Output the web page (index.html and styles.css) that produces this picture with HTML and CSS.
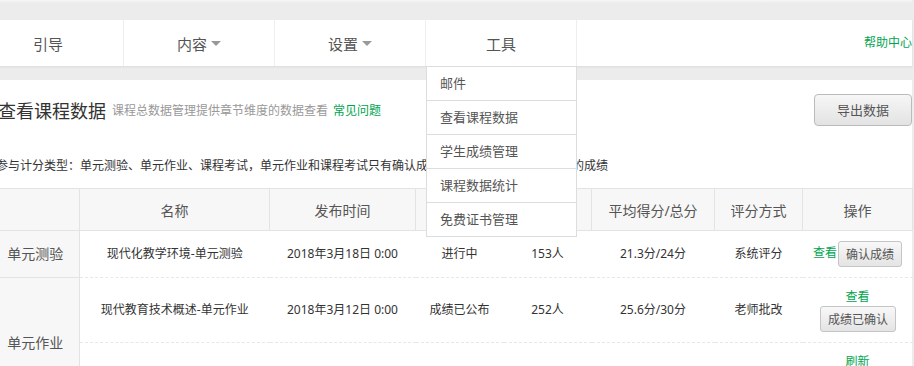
FILE: index.html
```html
<!DOCTYPE html>
<html lang="zh-CN">
<head>
  <meta charset="UTF-8" />
  <title>查看课程数据</title>
  <link rel="stylesheet" href="styles.css">
</head>
<body>
  <div class="page">
    <div class="topband"></div>

    <!-- 顶部导航 -->
    <div class="nav">
      <div class="nav-item">引导</div>
      <div class="nav-item">内容<span class="caret"></span></div>
      <div class="nav-item">设置<span class="caret"></span></div>
      <div class="nav-item">工具
        <ul class="dropdown">
          <li>邮件</li>
          <li>查看课程数据</li>
          <li>学生成绩管理</li>
          <li>课程数据统计</li>
          <li>免费证书管理</li>
        </ul>
      </div>
      <a class="nav-help" href="#">帮助中心</a>
    </div>

    <div class="main">
      <div class="head">
        <h1>查看课程数据</h1>
        <span class="desc">课程总数据管理提供章节维度的数据查看</span>
        <a class="link" href="#">常见问题</a>
        <button class="btn-export">导出数据</button>
      </div>

      <p class="rule">参与计分类型：单元测验、单元作业、课程考试，单元作业和课程考试只有确认成绩后才能计入学生课程最终的成绩</p>

      <table class="data">
        <colgroup>
          <col style="width:88px"><col style="width:190px"><col style="width:146px"><col style="width:88px">
          <col style="width:88px"><col style="width:123px"><col style="width:88px"><col style="width:110px">
        </colgroup>
        <thead>
          <tr>
            <th></th>
            <th>名称</th>
            <th>发布时间</th>
            <th>状态</th>
            <th>提交人数</th>
            <th>平均得分/总分</th>
            <th>评分方式</th>
            <th>操作</th>
          </tr>
        </thead>
        <tbody>
          <tr>
            <td class="type">单元测验</td>
            <td>现代化教学环境-单元测验</td>
            <td>2018年3月18日 0:00</td>
            <td>进行中</td>
            <td>153人</td>
            <td>21.3分/24分</td>
            <td>系统评分</td>
            <td class="ops"><a href="#">查看</a><button class="btn-sm">确认成绩</button></td>
          </tr>
          <tr class="tall">
            <td class="type" rowspan="2">单元作业</td>
            <td>现代教育技术概述-单元作业</td>
            <td>2018年3月12日 0:00</td>
            <td>成绩已公布</td>
            <td>252人</td>
            <td>25.6分/30分</td>
            <td>老师批改</td>
            <td class="ops"><a class="block" href="#">查看</a><button class="btn-sm">成绩已确认</button></td>
          </tr>
          <tr class="tall">
            <td>现代教育技术应用-单元作业</td>
            <td>2018年3月25日 0:00</td>
            <td>未公布</td>
            <td>0人</td>
            <td>0分/30分</td>
            <td>老师批改</td>
            <td class="ops"><a class="block" href="#">刷新</a><button class="btn-sm">确认成绩</button></td>
          </tr>
        </tbody>
      </table>
    </div>
  </div>
</body>
</html>
```

FILE: styles.css
```css
body {
  margin: 0;
  background: #ececec;
  font-family: "Noto Sans", "Noto Sans CJK SC", sans-serif;
  color: #333;
  overflow: hidden;
}

.page {
  margin-left: -27px;
  margin-right: 2px;
}

.topband {
  height: 20px;
  background: linear-gradient(#f7f7f7, #ececec 3px);
}

/* 导航 */
.nav {
  display: flex;
  height: 46px;
  background: #fff;
  box-shadow: 0 1px 2px rgba(0, 0, 0, 0.08);
  position: relative;
  z-index: 5;
}

.nav-item {
  position: relative;
  box-sizing: border-box;
  width: 151px;
  border-right: 1px solid #eee;
  display: flex;
  justify-content: center;
  align-items: center;
  font-size: 15px;
  color: #555;
}

.caret {
  display: inline-block;
  width: 0;
  height: 0;
  margin-left: 4px;
  border-left: 5px solid transparent;
  border-right: 5px solid transparent;
  border-top: 5px solid #999;
}

.nav-help {
  margin-left: auto;
  line-height: 46px;
  font-size: 12px;
  color: #00a550;
  text-decoration: none;
}

.dropdown {
  position: absolute;
  top: 46px;
  left: 0;
  box-sizing: border-box;
  width: 151px;
  margin: 0;
  padding: 0;
  list-style: none;
  background: #fff;
  border: 1px solid #ddd;
  border-bottom: none;
}

.dropdown li {
  height: 33px;
  line-height: 33px;
  padding-left: 13px;
  border-bottom: 1px solid #ddd;
  font-size: 13px;
  color: #555;
}

/* 主体 */
.main {
  margin-top: 14px;
  background: #fff;
  padding: 14px 0 0 25px;
  height: 400px;
}

.head {
  display: flex;
  align-items: center;
  height: 31px;
}

.head h1 {
  margin: 0;
  font-size: 18px;
  font-weight: normal;
  color: #333;
}

.desc {
  margin-left: 6px;
  font-size: 12px;
  color: #999;
}

.link {
  margin-left: 5px;
  font-size: 12px;
  color: #00a550;
  text-decoration: none;
}

.btn-export {
  margin-left: auto;
  width: 98px;
  height: 32px;
  border: 1px solid #bbb;
  border-radius: 4px;
  background: linear-gradient(#f6f6f6, #e3e3e3);
  font-family: inherit;
  font-size: 13px;
  color: #555;
}

.rule {
  margin: 29px 0 0 -2px;
  font-size: 12px;
  line-height: 24px;
  color: #333;
  white-space: nowrap;
}

/* 表格 */
.data {
  margin: 10px 0 0 -7px;
  width: 921px;
  table-layout: fixed;
  border-collapse: collapse;
  font-size: 12px;
}

.data th {
  height: 41px;
  padding: 0;
  background: #f7f7f7;
  border: 1px solid #e3e3e3;
  font-size: 14px;
  font-weight: normal;
  color: #555;
}

.data td {
  padding: 10px 0;
  text-align: center;
  border-bottom: 1px dashed #e8e8e8;
  line-height: 18px;
  white-space: nowrap;
}

.data td.type {
  background: #f7f7f7;
  border-right: 1px solid #e3e3e3;
  border-bottom: 1px solid #e3e3e3;
  font-size: 14px;
  color: #555;
}

.data tr.tall td {
  padding: 10px 0;
}

.ops a {
  color: #00a550;
  text-decoration: none;
}

.ops a.block {
  display: block;
}

.btn-sm {
  height: 26px;
  margin-left: 1px;
  padding: 0 7px;
  border: 1px solid #c5c5c5;
  border-radius: 3px;
  background: linear-gradient(#f8f8f8, #e4e4e4);
  font-family: inherit;
  font-size: 12px;
  color: #555;
  vertical-align: middle;
}
```
